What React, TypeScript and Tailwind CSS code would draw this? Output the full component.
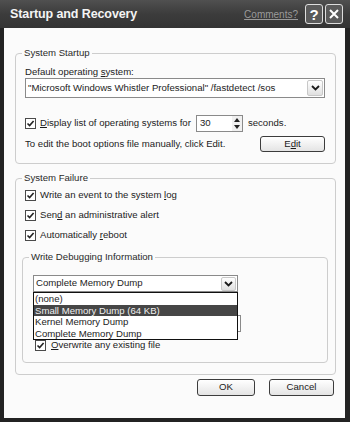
import type { ReactNode } from "react";

const font = { fontFamily: '"Liberation Sans", Arial, sans-serif' };

function Check({ className = "" }: { className?: string }) {
  return (
    <span className={`flex h-[11px] w-[11px] shrink-0 items-center justify-center border border-[#4a4a4a] bg-white ${className}`}>
      <svg width="9" height="9" viewBox="0 0 9 9">
        <path d="M1.5 4.5 L3.6 6.6 L7.6 2" stroke="#222" strokeWidth="1.6" fill="none" />
      </svg>
    </span>
  );
}

function Group({ label, className = "", children }: { label: string; className?: string; children: ReactNode }) {
  return (
    <div className={`relative rounded-[4px] border border-[#cdcdcd] ${className}`}>
      <span className="absolute -top-[7px] left-[6px] bg-[#fbfbfb] px-[2px] leading-[12px] text-[#2a2a2a]">{label}</span>
      {children}
    </div>
  );
}

function Button({ children, className = "" }: { children: ReactNode; className?: string }) {
  return (
    <div className={`flex items-center justify-center rounded-[3px] border border-[#3c3c3c] bg-gradient-to-b from-white to-[#e4e4e4] text-[#1a1a1a] ${className}`}>
      {children}
    </div>
  );
}

function Chevron() {
  return (
    <svg width="9" height="6" viewBox="0 0 9 6">
      <path d="M1 1 L4.5 4.5 L8 1" stroke="#1a1a1a" strokeWidth="1.8" fill="none" />
    </svg>
  );
}

export default function App() {
  return (
    <div className="flex h-[422px] w-[350px] flex-col bg-[#232323] text-[9.6px] text-[#1c1c1c]" style={font}>
      {/* title bar */}
      <div className="flex h-[28px] shrink-0 items-center bg-gradient-to-b from-[#505050] via-[#3c3c3c] to-[#343434] pl-[10px] pr-[7px]">
        <span className="text-[12.5px] font-bold tracking-[-0.1px] text-[#f4f4f4]">Startup and Recovery</span>
        <span className="ml-auto mr-[7px] text-[10px] text-[#9a9a9a] underline">Comments?</span>
        <div className="flex h-[20px] w-[18px] items-center justify-center rounded-[3px] border border-[#ddd] bg-[#5a5a5a] text-[15px] font-bold leading-none text-white">?</div>
        <div className="ml-[2px] flex h-[20px] w-[18px] items-center justify-center rounded-[3px] border border-[#ddd] bg-[#5a5a5a]">
          <svg width="12" height="12" viewBox="0 0 12 12">
            <path d="M2 2 L10 10 M10 2 L2 10" stroke="#fff" strokeWidth="2" />
          </svg>
        </div>
      </div>

      {/* body */}
      <div className="mb-[4px] ml-[4px] mr-[5px] flex flex-1 flex-col bg-[#fbfbfb] pt-[25px]">
        <Group label="System Startup" className="ml-[11px] w-[321px]">
          <div className="ml-[9px] mt-[12px] leading-[12px]">
            Default operating <span className="underline">s</span>ystem:
          </div>
          <div className="ml-[9px] flex h-[20px] w-[300px] items-center border border-[#8a8a8a] bg-white pl-[2px] pr-[1px]">
            <span className="flex-1">"Microsoft Windows Whistler Professional" /fastdetect /sos</span>
            <div className="flex h-[16px] w-[16px] items-center justify-center rounded-[2px] border border-[#c8c8c8] bg-gradient-to-b from-white to-[#e0e0e0]">
              <Chevron />
            </div>
          </div>
          <div className="ml-[9px] mt-[17px] flex h-[17px] items-center">
            <Check />
            <span className="ml-[4px]">
              <span className="underline">D</span>isplay list of operating systems for
            </span>
            <div className="ml-[5px] flex h-[17px] w-[47px] items-center border border-[#8a8a8a] bg-white pl-[3px]">
              <span className="flex-1">30</span>
              <div className="flex h-[15px] w-[10px] flex-col items-center justify-center gap-[3px] bg-[#f0f0f0]">
                <svg width="6" height="4" viewBox="0 0 6 4"><path d="M0 4 L3 0 L6 4 Z" fill="#222" /></svg>
                <svg width="6" height="4" viewBox="0 0 6 4"><path d="M0 0 L3 4 L6 0 Z" fill="#222" /></svg>
              </div>
            </div>
            <span className="ml-[5px]">seconds.</span>
          </div>
          <div className="ml-[9px] mt-[4px] flex h-[16px] items-center">
            <span>To edit the boot options file manually, click Edit.</span>
            <Button className="ml-auto mr-[10px] h-[16px] w-[65px]">
              <span>
                E<span className="underline">d</span>it
              </span>
            </Button>
          </div>
          <div className="h-[11px]" />
        </Group>

        <Group label="System Failure" className="ml-[11px] mt-[14px] w-[321px]">
          <div className="mt-[6px] flex flex-col pl-[9px]">
            <div className="flex h-[20px] items-center">
              <Check />
              <span className="ml-[4px]">
                Write an event to the system <span className="underline">l</span>og
              </span>
            </div>
            <div className="flex h-[20px] items-center">
              <Check />
              <span className="ml-[4px]">
                Sen<span className="underline">d</span> an administrative alert
              </span>
            </div>
            <div className="flex h-[20px] items-center">
              <Check />
              <span className="ml-[4px]">
                Automatically <span className="underline">r</span>eboot
              </span>
            </div>
          </div>

          <Group label="Write Debugging Information" className="ml-[6px] mt-[12px] w-[306px]">
            <div className="relative ml-[10px] pt-[17px]">
              <div className="flex h-[17px] w-[205px] items-center border border-[#8a8a8a] bg-white pl-[2px] pr-[1px]">
                <span className="flex-1">Complete Memory Dump</span>
                <div className="flex h-[14px] w-[15px] items-center justify-center rounded-[2px] border border-[#c8c8c8] bg-gradient-to-b from-white to-[#e0e0e0]">
                  <Chevron />
                </div>
              </div>
              {/* dump file field, hidden behind the open list */}
              <div className="mt-[23px] h-[17px] w-[208px] border border-[#8a8a8a] bg-white" />
              <div className="ml-[2px] mt-[6px] flex h-[14px] items-center">
                <Check />
                <span className="ml-[5px]">
                  <span className="underline">O</span>verwrite any existing file
                </span>
              </div>

              {/* open dropdown list */}
              <div className="absolute left-0 top-[34px] flex w-[205px] flex-col border border-[#111] bg-white leading-[11.5px]">
                <div className="h-[11.5px] pl-[1px]">(none)</div>
                <div className="h-[11.5px] bg-[#464646] pl-[1px] text-[#f0f0f0]">Small Memory Dump (64 KB)</div>
                <div className="h-[11.5px] pl-[1px]">Kernel Memory Dump</div>
                <div className="h-[11.5px] pl-[1px]">Complete Memory Dump</div>
              </div>
            </div>
            <div className="h-[10px]" />
          </Group>
          <div className="h-[11px]" />
        </Group>

        <div className="mr-[11px] mt-[4px] flex justify-end gap-[14px]">
          <Button className="h-[17px] w-[58px]">OK</Button>
          <Button className="h-[17px] w-[65px]">Cancel</Button>
        </div>
      </div>
    </div>
  );
}
